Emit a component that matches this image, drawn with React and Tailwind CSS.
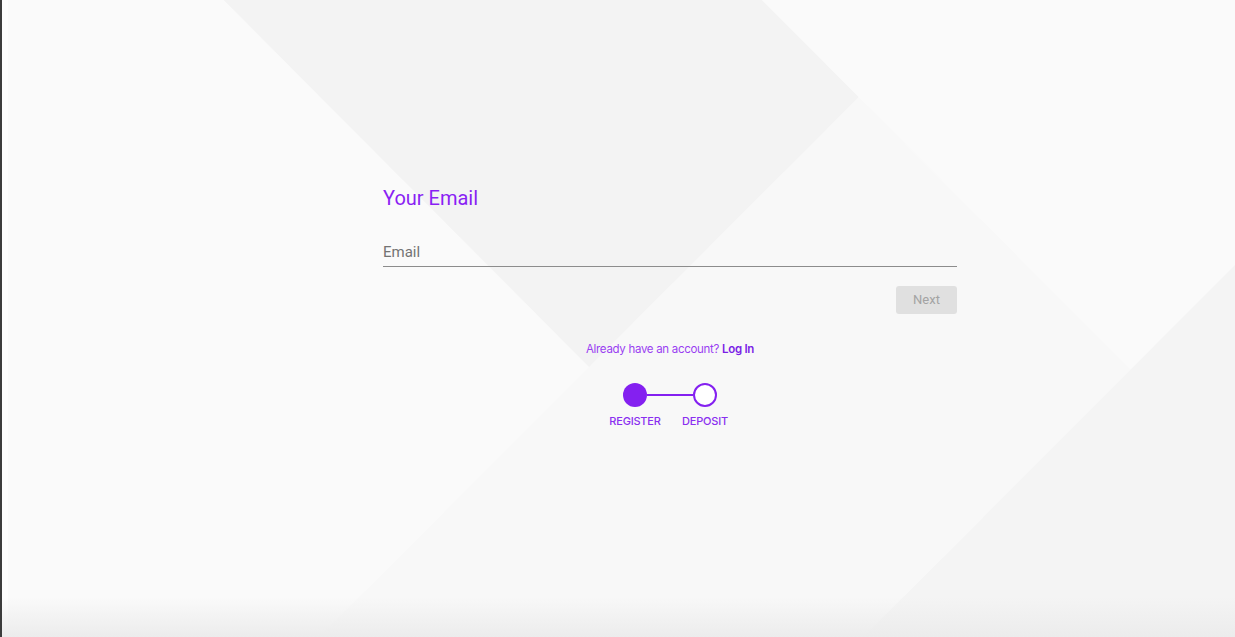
import React from 'react';

const Backdrop = () => (
  <svg
    className="absolute inset-0 w-full h-full"
    viewBox="0 0 1235 637"
    preserveAspectRatio="none"
    aria-hidden="true"
  >
    <polygon points="858,97 1235,474 1235,637 318,637 588,367" fill="#f8f8f8" />
    <polygon points="222,0 761,0 858,97 588,367" fill="#f3f3f3" />
    <polygon points="1235,265 1235,637 863,637" fill="#f4f4f4" />
  </svg>
);

const Stepper = () => (
  <div className="mt-[27px]">
    <div className="w-[94px] mx-auto flex items-center">
      <span className="w-6 h-6 rounded-full bg-[#8420f0]" />
      <span className="flex-1 h-[2px] bg-[#8420f0]" />
      <span className="w-6 h-6 rounded-full border-2 border-[#8420f0] bg-white" />
    </div>
    <div className="w-[140px] mx-auto grid grid-cols-2 mt-[9px] text-center text-[11px] leading-none font-medium tracking-[-0.2px] text-[#8a2ff0]">
      <span>REGISTER</span>
      <span>DEPOSIT</span>
    </div>
  </div>
);

export default function App() {
  return (
    <div className="relative min-h-screen h-[637px] overflow-hidden bg-[#fafafa] border-l-2 border-[#3c3c3c]">
      <Backdrop />
      <div className="absolute left-0 top-0 bottom-0 w-[6px] bg-white/60" />
      <div className="absolute left-0 right-0 bottom-0 h-[40px] bg-linear-to-b from-transparent to-[#ececec]" />

      <div className="relative pl-[381px] pt-[188px]">
        <div className="w-[574px]" style={{ fontFamily: 'Roboto, "Liberation Sans", sans-serif' }}>
          <h1 className="text-[20px] leading-none text-[#8a1ff3]">Your Email</h1>

          <input
            type="email"
            placeholder="Email"
            className="mt-[34px] block w-full h-[25px] pb-[4px] bg-transparent border-b border-[#8c8c8c] text-[15px] leading-[20px] text-[#333] placeholder:text-[#737373] outline-none"
          />

          <div className="mt-[19px] flex justify-end">
            <button className="w-[61px] h-[28px] rounded-[3px] bg-[#e0e0e0] text-[13px] text-[#a3a3a3]">
              Next
            </button>
          </div>

          <div style={{ fontFamily: 'Inter, "Noto Sans", sans-serif' }}>
            <p className="mt-[30px] text-center text-[11.5px] leading-none tracking-[-0.3px] text-[#9a40f2]">
              Already have an account? <a href="#" className="font-semibold text-[#7b1fe6]">Log In</a>
            </p>
            <Stepper />
          </div>
        </div>
      </div>
    </div>
  );
}
